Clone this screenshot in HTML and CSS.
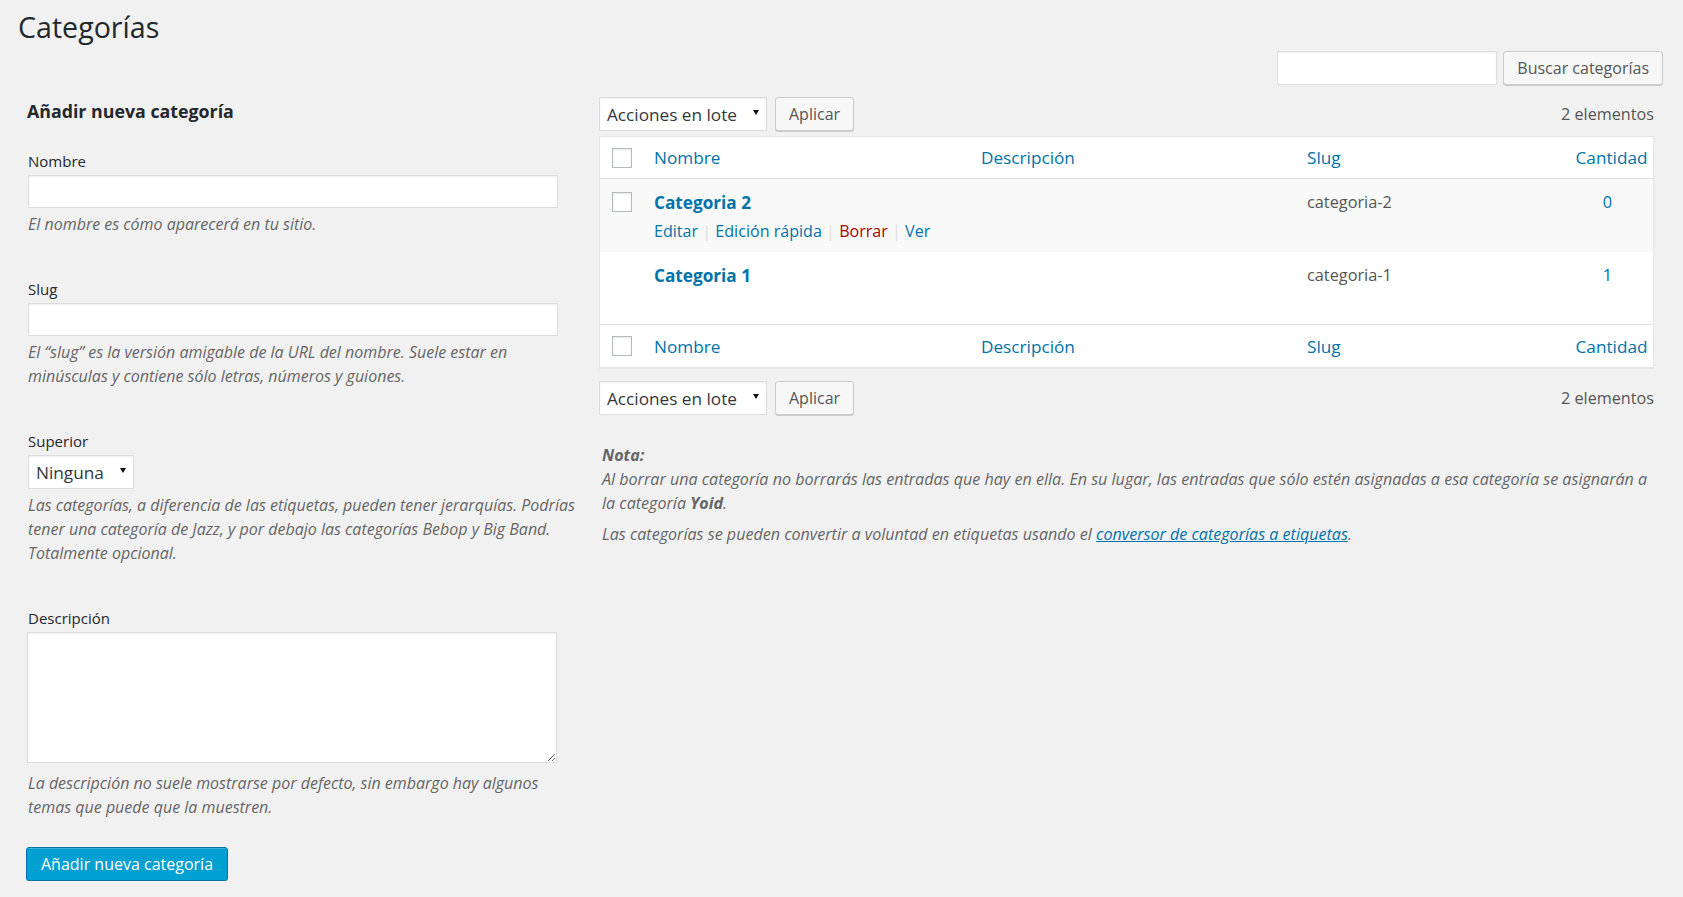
FILE: index.html
```html
<!DOCTYPE html>
<html lang="es">
<head>
  <meta charset="UTF-8" />
  <title>Categorías</title>
  <link rel="stylesheet" href="styles.css">
</head>
<body>
<div class="wrap">
  <h1 class="page-title">Categorías</h1>

  <form class="search-box">
    <input type="search" class="search-input">
    <button type="button" class="button">Buscar categorías</button>
  </form>

  <div class="columns">
    <!-- Formulario de alta -->
    <div class="col-left">
      <h2 class="form-title">Añadir nueva categoría</h2>

      <div class="form-field">
        <label for="tag-name">Nombre</label>
        <input type="text" id="tag-name" class="text-input">
        <p class="description">El nombre es cómo aparecerá en tu sitio.</p>
      </div>

      <div class="form-field">
        <label for="tag-slug">Slug</label>
        <input type="text" id="tag-slug" class="text-input">
        <p class="description">El “slug” es la versión amigable de la URL del nombre. Suele estar en minúsculas y contiene sólo letras, números y guiones.</p>
      </div>

      <div class="form-field">
        <label for="parent">Superior</label>
        <span class="select-wrap">
          <select id="parent" class="select-parent">
            <option>Ninguna</option>
          </select>
        </span>
        <p class="description">Las categorías, a diferencia de las etiquetas, pueden tener jerarquías. Podrías tener una categoría de Jazz, y por debajo las categorías Bebop y Big Band. Totalmente opcional.</p>
      </div>

      <div class="form-field last">
        <label for="tag-description">Descripción</label>
        <textarea id="tag-description" class="text-area"></textarea>
        <p class="description">La descripción no suele mostrarse por defecto, sin embargo hay algunos temas que puede que la muestren.</p>
      </div>

      <button type="button" class="button button-primary">Añadir nueva categoría</button>
    </div>

    <!-- Listado -->
    <div class="col-right">
      <div class="tablenav top">
        <div class="bulk">
          <span class="select-wrap">
            <select class="select-bulk"><option>Acciones en lote</option></select>
          </span>
          <button type="button" class="button">Aplicar</button>
        </div>
        <span class="count">2 elementos</span>
      </div>

      <table class="terms">
        <colgroup>
          <col class="c-cb"><col class="c-name"><col class="c-desc"><col class="c-slug"><col class="c-posts">
        </colgroup>
        <thead>
          <tr>
            <th class="check-col"><span class="checkbox"></span></th>
            <th><a href="#">Nombre</a></th>
            <th><a href="#">Descripción</a></th>
            <th><a href="#">Slug</a></th>
            <th class="posts"><a href="#">Cantidad</a></th>
          </tr>
        </thead>
        <tbody>
          <tr class="alt">
            <td class="check-col"><span class="checkbox"></span></td>
            <td>
              <a href="#" class="row-title">Categoria 2</a>
              <div class="row-actions">
                <a href="#">Editar</a> <span class="sep">|</span>
                <a href="#">Edición rápida</a> <span class="sep">|</span>
                <a href="#" class="delete">Borrar</a> <span class="sep">|</span>
                <a href="#">Ver</a>
              </div>
            </td>
            <td></td>
            <td class="slug">categoria-2</td>
            <td class="posts"><a href="#">0</a></td>
          </tr>
          <tr>
            <td class="check-col"></td>
            <td>
              <a href="#" class="row-title">Categoria 1</a>
              <div class="row-actions hidden">
                <a href="#">Editar</a> <span class="sep">|</span>
                <a href="#">Edición rápida</a> <span class="sep">|</span>
                <a href="#">Ver</a>
              </div>
            </td>
            <td></td>
            <td class="slug">categoria-1</td>
            <td class="posts"><a href="#">1</a></td>
          </tr>
        </tbody>
        <tfoot>
          <tr>
            <th class="check-col"><span class="checkbox"></span></th>
            <th><a href="#">Nombre</a></th>
            <th><a href="#">Descripción</a></th>
            <th><a href="#">Slug</a></th>
            <th class="posts"><a href="#">Cantidad</a></th>
          </tr>
        </tfoot>
      </table>

      <div class="tablenav bottom">
        <div class="bulk">
          <span class="select-wrap">
            <select class="select-bulk"><option>Acciones en lote</option></select>
          </span>
          <button type="button" class="button">Aplicar</button>
        </div>
        <span class="count">2 elementos</span>
      </div>

      <div class="notes">
        <p><strong class="note-label">Nota:</strong><span class="note-text">Al borrar una categoría no borrarás las entradas que hay en ella. En su lugar, las entradas que sólo estén asignadas a esa categoría se asignarán a la categoría <strong>Yoid</strong>.</span></p>
        <p>Las categorías se pueden convertir a voluntad en etiquetas usando el <a href="#">conversor de categorías a etiquetas</a>.</p>
      </div>
    </div>
  </div>
</div>
</body>
</html>
```

FILE: styles.css
```css
body {
  margin: 0;
  background: #f1f1f1;
  font-family: "Open Sans", "Noto Sans", sans-serif;
  font-size: 15px;
  color: #444;
}

a {
  color: #0073aa;
  text-decoration: none;
}

.wrap {
  padding: 0 20px 0 18px;
}

.page-title {
  margin: 8px 0 0;
  font-size: 28.6px;
  line-height: 38px;
  font-weight: 400;
  color: #23282d;
}

/* Buscador */
.search-box {
  display: flex;
  justify-content: flex-end;
  gap: 6px;
  margin: 5px 0 0;
}

.search-input,
.text-input,
.text-area,
.select-wrap select {
  box-sizing: border-box;
  background: #fff;
  border: 1px solid #ddd;
  box-shadow: inset 0 1px 2px rgba(0, 0, 0, .07);
  font-family: inherit;
  color: #32373c;
  outline: none;
}

.search-input {
  width: 220px;
  height: 34px;
}

.button {
  box-sizing: border-box;
  height: 34px;
  padding: 0 13px;
  font-family: inherit;
  font-size: 16px;
  line-height: 32px;
  color: #555;
  background: #f7f7f7;
  border: 1px solid #ccc;
  border-radius: 3px;
  box-shadow: 0 1px 0 #ccc;
  cursor: pointer;
}

.button-primary {
  margin-left: -2px;
  padding: 0 14px;
  color: #fff;
  background: #00a0d2;
  border-color: #0073aa;
  box-shadow: inset 0 1px 0 rgba(120, 200, 230, .5), 0 1px 0 rgba(0, 0, 0, .15);
}

/* Columnas */
.columns {
  display: flex;
  align-items: flex-start;
}

.col-left {
  flex: none;
  width: 558px;
  padding-left: 10px;
}

.col-right {
  flex: none;
  width: 1055px;
  margin-left: 13px;
}

.form-title {
  margin: 14px 0 28px -1px;
  font-size: 17.8px;
  line-height: 24px;
  font-weight: 700;
  color: #23282d;
}

.form-field {
  margin-bottom: 43px;
}

.form-field.last {
  margin-bottom: 28px;
}

.form-field label {
  display: block;
  margin-bottom: 4px;
  font-size: 15px;
  line-height: 20px;
  color: #23282d;
}

.text-input {
  display: block;
  width: 95%;
  height: 33px;
}

.text-area {
  display: block;
  width: 95%;
  height: 131px;
  margin-left: -1px;
  margin-bottom: 8px;
  resize: vertical;
}

.description,
.notes p {
  margin: 4px 0 0;
  font-size: 16px;
  line-height: 24px;
  font-style: italic;
  color: #666;
}

.description {
  margin-right: 4px;
}

/* Selects */
.select-wrap {
  position: relative;
  display: inline-block;
  vertical-align: top;
}

.select-wrap select {
  appearance: none;
  -webkit-appearance: none;
  height: 34px;
  padding: 0 20px 0 7px;
  font-size: 17.2px;
  border-radius: 0;
}

.select-wrap::after {
  content: "";
  position: absolute;
  right: 8px;
  top: 13px;
  border-left: 3px solid transparent;
  border-right: 3px solid transparent;
  border-top: 5px solid #111;
  pointer-events: none;
}

.select-parent {
  width: 106px;
}

.select-bulk {
  width: 168px;
}

/* Barra de acciones */
.tablenav {
  display: flex;
  justify-content: space-between;
  align-items: center;
}

.tablenav.top {
  padding-top: 12px;
}

.tablenav.bottom {
  margin-top: 13px;
}

.bulk {
  display: flex;
  gap: 8px;
}

.count {
  font-size: 16.2px;
  color: #555;
}

/* Tabla */
.terms {
  width: 100%;
  margin-top: 5px;
  table-layout: fixed;
  border-collapse: separate;
  border-spacing: 0;
  background: #fff;
  border: 1px solid #e5e5e5;
  box-shadow: 0 1px 1px rgba(0, 0, 0, .04);
}

.c-cb { width: 45px; }
.c-name { width: 327px; }
.c-desc { width: 326px; }
.c-slug { width: 264px; }
.c-posts { width: 91px; }

.terms th {
  height: 41px;
  padding: 0 0 0 9px;
  text-align: left;
  font-weight: 400;
  font-size: 17.2px;
  vertical-align: middle;
}

.terms thead th {
  border-bottom: 1px solid #e1e1e1;
}

.terms tfoot th {
  height: 42px;
  border-top: 1px solid #e1e1e1;
}

.terms .check-col {
  padding: 0 0 0 12px;
}

.terms th.posts {
  text-align: center;
  padding: 0 0 0 8px;
}

.terms td {
  padding: 11px 0 9.5px 9px;
  vertical-align: top;
  font-size: 16.3px;
  line-height: 24px;
  color: #555;
}

.terms td.check-col {
  padding-top: 13px;
}

.terms td.posts {
  padding-left: 0;
  text-align: center;
}

.terms tr.alt td {
  background: #f9f9f9;
}

.checkbox {
  display: block;
  box-sizing: border-box;
  width: 20px;
  height: 20px;
  background: #fff;
  border: 1px solid #b4b9be;
  box-shadow: inset 0 1px 2px rgba(0, 0, 0, .1);
}

.row-title {
  display: block;
  font-size: 17.2px;
  line-height: 26px;
  font-weight: 700;
}

.row-actions {
  margin-top: 4px;
  font-size: 16.1px;
  line-height: 22px;
  color: #ddd;
}

.row-actions.hidden {
  visibility: hidden;
}

.row-actions .delete {
  color: #a00;
}

/* Notas */
.notes {
  margin-top: 28px;
  padding-left: 3px;
}

.notes p {
  margin: 0 0 7px;
  font-size: 16.1px;
}

.note-label,
.note-text {
  display: block;
}

.notes a {
  text-decoration: underline;
}
```
